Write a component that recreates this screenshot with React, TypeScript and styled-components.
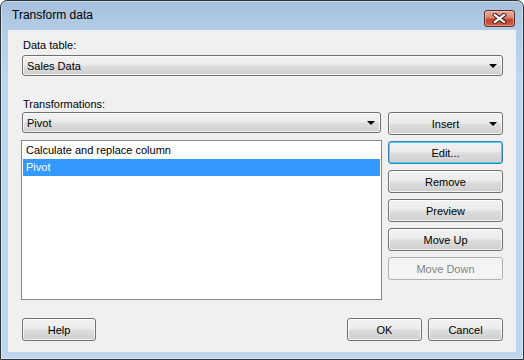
import styled, { createGlobalStyle, css } from "styled-components";

const GlobalStyle = createGlobalStyle`
  html, body {
    margin: 0;
    padding: 0;
    background: #ffffff;
  }
  * {
    box-sizing: border-box;
  }
`;

const uiFont = `"Liberation Sans", Arial, sans-serif`;

const Window = styled.div`
  width: 524px;
  height: 360px;
  display: flex;
  flex-direction: column;
  border: 1px solid #2e3338;
  border-radius: 7px 7px 0 0;
  background: linear-gradient(180deg, #a6c0dc 0px, #b4cde7 30px, #bed6ee 80px, #bfd7ee 100%);
  box-shadow: inset 0 0 0 1px rgba(255, 255, 255, 0.45);
  font-family: ${uiFont};
  overflow: hidden;
`;

const TitleBar = styled.div`
  height: 29px;
  flex: none;
  display: flex;
  justify-content: space-between;
  align-items: flex-start;
  padding: 0 8px 0 11px;
`;

const Title = styled.span`
  margin-top: 7px;
  font-size: 12px;
  line-height: 15px;
  color: #000;
`;

const CloseButton = styled.div`
  margin-top: 9px;
  width: 31px;
  height: 17px;
  display: flex;
  align-items: center;
  justify-content: center;
  border: 1px solid #5a2a24;
  border-radius: 3px;
  background: linear-gradient(180deg, #e7a898 0%, #d78674 45%, #c0432d 55%, #cf5f48 100%);
  box-shadow: inset 0 0 0 1px rgba(255, 220, 210, 0.45);
`;

const Panel = styled.div`
  flex: none;
  height: 322px;
  margin: 0 7px;
  background: #f0f0f0;
  display: flex;
  flex-direction: column;
  padding: 9px 13px 0 14px;
`;

const Label = styled.div<{ $top?: number }>`
  font-size: 11px;
  line-height: 13px;
  color: #000;
  margin-top: ${({ $top }) => $top ?? 0}px;
  padding-left: 1px;
`;

const Arrow = styled.span`
  width: 0;
  height: 0;
  border-left: 4px solid transparent;
  border-right: 4px solid transparent;
  border-top: 4px solid #000;
`;

const Combo = styled.div<{ $top?: number; $width?: number }>`
  margin-top: ${({ $top }) => $top ?? 0}px;
  width: ${({ $width }) => ($width ? `${$width}px` : "100%")};
  height: 21px;
  display: flex;
  align-items: center;
  justify-content: space-between;
  padding: 0 5px 0 4px;
  border: 1px solid #707070;
  border-radius: 3px;
  background: linear-gradient(180deg, #f2f2f2 0%, #ebebeb 48%, #dddddd 52%, #cfcfcf 100%);
  box-shadow: inset 0 0 0 1px rgba(255, 255, 255, 0.7);
  font-size: 11px;
  color: #000;
`;

const Work = styled.div`
  margin-top: 1px;
  display: grid;
  grid-template-columns: 360px 115px;
  column-gap: 6px;
  align-items: start;
`;

const LeftColumn = styled.div`
  display: flex;
  flex-direction: column;
  gap: 7px;
`;

const ListBox = styled.div`
  margin-left: -1px;
  width: 361px;
  height: 160px;
  border: 1px solid #828790;
  background: #fff;
  padding: 1px;
  display: flex;
  flex-direction: column;
`;

const ListItem = styled.div<{ $selected?: boolean }>`
  height: 17px;
  line-height: 17px;
  padding-left: 3px;
  font-size: 11px;
  color: ${({ $selected }) => ($selected ? "#fff" : "#000")};
  background: ${({ $selected }) => ($selected ? "#3399ff" : "transparent")};
`;

const ButtonColumn = styled.div`
  display: flex;
  flex-direction: column;
  gap: 6px;
`;

const Button = styled.div<{ $variant?: "normal" | "focused" | "disabled"; $width?: number }>`
  position: relative;
  width: ${({ $width }) => ($width ? `${$width}px` : "100%")};
  height: 23px;
  display: flex;
  align-items: center;
  justify-content: center;
  border: 1px solid #707070;
  border-radius: 3px;
  background: linear-gradient(180deg, #f2f2f2 0%, #ebebeb 48%, #dddddd 52%, #cfcfcf 100%);
  box-shadow: inset 0 0 0 1px rgba(255, 255, 255, 0.75);
  font-size: 11px;
  color: #000;

  ${({ $variant }) =>
    $variant === "focused" &&
    css`
      border-color: #3c7fb1;
      box-shadow: inset 0 0 0 1px #48d3f6;
    `}

  ${({ $variant }) =>
    $variant === "disabled" &&
    css`
      border-color: #adb2b5;
      background: #f4f4f4;
      box-shadow: none;
      color: #838383;
    `}
`;

const MenuArrow = styled(Arrow)`
  position: absolute;
  right: 5px;
  top: 9px;
`;

const Footer = styled.div`
  margin-top: 18px;
  display: flex;
  justify-content: space-between;
`;

const FooterRight = styled.div`
  display: flex;
  gap: 6px;
`;

const CloseGlyph = () => (
  <svg width="15" height="11" viewBox="0 0 15 11">
    <path d="M3 2 L12 9 M12 2 L3 9" stroke="#4a2520" strokeWidth="4.2" strokeLinecap="square" />
    <path d="M3 2 L12 9 M12 2 L3 9" stroke="#ffffff" strokeWidth="2.2" strokeLinecap="square" />
  </svg>
);

const sideButtons = ["Edit...", "Remove", "Preview", "Move Up"];

export default function App() {
  return (
    <>
      <GlobalStyle />
      <Window>
        <TitleBar>
          <Title>Transform data</Title>
          <CloseButton>
            <CloseGlyph />
          </CloseButton>
        </TitleBar>
        <Panel>
          <Label>Data table:</Label>
          <Combo $top={3}>
            <span>Sales Data</span>
            <Arrow />
          </Combo>
          <Label $top={22}>Transformations:</Label>
          <Work>
            <LeftColumn>
              <Combo $width={359}>
                <span>Pivot</span>
                <Arrow />
              </Combo>
              <ListBox>
                <ListItem>Calculate and replace column</ListItem>
                <ListItem $selected>Pivot</ListItem>
              </ListBox>
            </LeftColumn>
            <ButtonColumn>
              <Button>
                Insert
                <MenuArrow />
              </Button>
              {sideButtons.map((label) => (
                <Button key={label} $variant={label === "Edit..." ? "focused" : "normal"}>
                  {label}
                </Button>
              ))}
              <Button $variant="disabled">Move Down</Button>
            </ButtonColumn>
          </Work>
          <Footer>
            <Button $width={74}>Help</Button>
            <FooterRight>
              <Button $width={75}>OK</Button>
              <Button $width={75}>Cancel</Button>
            </FooterRight>
          </Footer>
        </Panel>
      </Window>
    </>
  );
}
